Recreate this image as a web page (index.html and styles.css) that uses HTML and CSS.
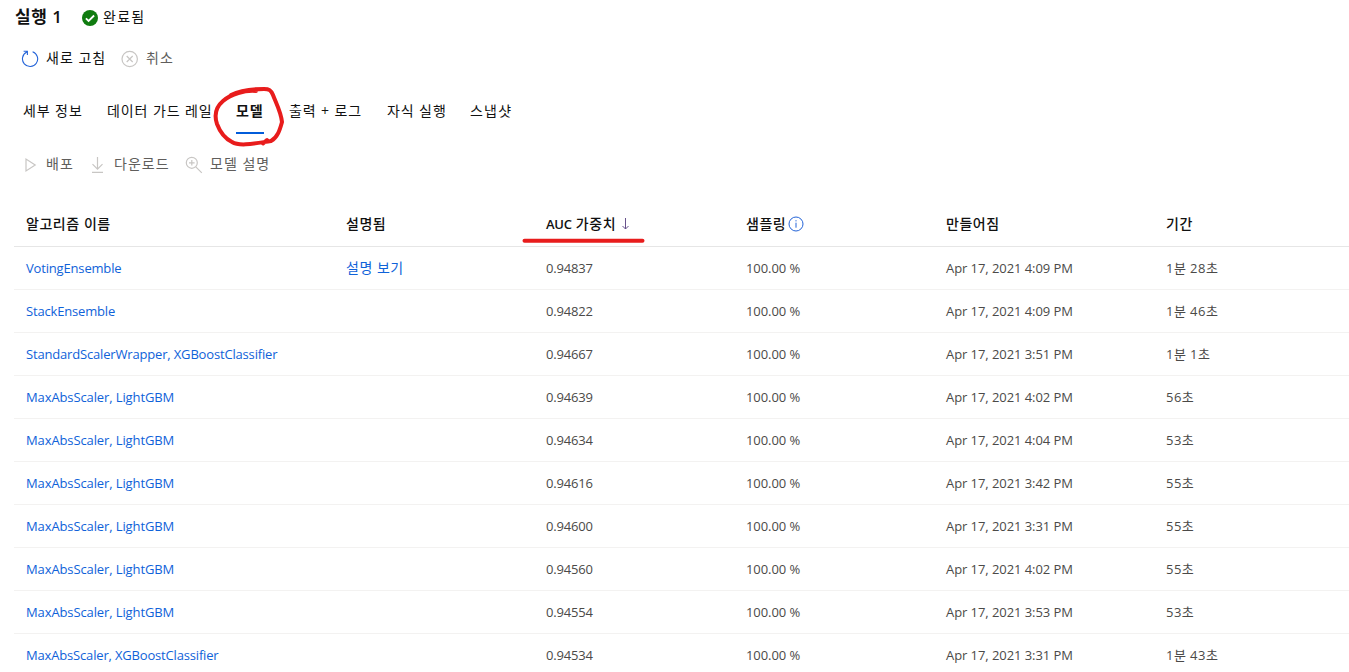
FILE: index.html
```html
<!DOCTYPE html>
<html lang="ko">
<head>
<meta charset="utf-8">
<title>실행 1</title>
<link rel="stylesheet" href="styles.css">
</head>
<body>
<main class="page">
  <header class="heading">
    <h1 class="title">실행 1</h1>
    <svg class="status-icon" width="16" height="16" viewBox="0 0 16 16"><circle cx="8" cy="8" r="8" fill="#107c10"/><path d="M3.9 8.3l2.7 2.7 5.5-5.5" fill="none" stroke="#fff" stroke-width="1.8"/></svg>
    <span class="status">완료됨</span>
  </header>

  <div class="toolbar actions">
    <button class="command refresh"><svg width="18" height="18" viewBox="0 0 18 18" fill="none" stroke="#2464d8" stroke-width="1.1"><path d="M11.6 1.8A7.6 7.6 0 1 1 5.8 2.1M2.6 1.3h3.8v3.8"/></svg><span>새로 고침</span></button>
    <button class="command cancel muted"><svg width="18" height="18" viewBox="0 0 18 18" fill="none" stroke="#c8c6c4" stroke-width="1.2"><circle cx="8.7" cy="9" r="7.7"/><path d="M5.7 6l6 6M11.7 6l-6 6"/></svg><span>취소</span></button>
  </div>

  <nav class="tabs">
    <a class="tab t1">세부 정보</a>
    <a class="tab t2">데이터 가드 레일</a>
    <a class="tab t3 active">모델</a>
    <a class="tab t4">출력 + 로그</a>
    <a class="tab t5">자식 실행</a>
    <a class="tab t6">스냅샷</a>
  </nav>

  <div class="toolbar model-actions">
    <button class="command deploy muted"><svg width="18" height="18" viewBox="0 0 18 18" fill="none" stroke="#c8c6c4" stroke-width="1.2"><path d="M5 3v12L14.2 9z"/></svg><span>배포</span></button>
    <button class="command download muted"><svg width="18" height="18" viewBox="0 0 18 18" fill="none" stroke="#c8c6c4" stroke-width="1.2"><path d="M8.5 1v12M3.5 8.2l5 5 5-5M3 16.4h11"/></svg><span>다운로드</span></button>
    <button class="command explain muted"><svg width="18" height="18" viewBox="0 0 18 18" fill="none" stroke="#c8c6c4" stroke-width="1.2"><circle cx="6.8" cy="6.8" r="5.5"/><path d="M10.8 10.8l6 6M4 6.8h5.6M6.8 4v5.6"/></svg><span>모델 설명</span></button>
  </div>

  <section class="table">
    <div class="row head">
      <span>알고리즘 이름</span><span>설명됨</span>
      <span class="metric"><span><span class="latin">AUC</span> 가중치</span><svg class="sort" width="9" height="14" viewBox="0 0 9 14" fill="none" stroke="#68528c" stroke-width="1"><path d="M4.5 1v11M1.5 9l3 3 3-3"/></svg></span>
      <span class="sampling"><span>샘플링</span><svg width="16" height="16" viewBox="0 0 16 16" fill="none" stroke="#2464d8" stroke-width="1"><circle cx="8" cy="8" r="7"/><path d="M8 6.7v5M8 4.2v1.2"/></svg></span>
      <span>만들어짐</span><span>기간</span>
    </div>
    <div class="row"><a>VotingEnsemble</a><a class="ko">설명 보기</a><span class="num">0.94837</span><span class="pct">100.00 %</span><span class="date">Apr 17, 2021 4:09 PM</span><span class="time">1분 28초</span></div>
    <div class="row"><a>StackEnsemble</a><a></a><span class="num">0.94822</span><span class="pct">100.00 %</span><span class="date">Apr 17, 2021 4:09 PM</span><span class="time">1분 46초</span></div>
    <div class="row"><a>StandardScalerWrapper, XGBoostClassifier</a><a></a><span class="num">0.94667</span><span class="pct">100.00 %</span><span class="date">Apr 17, 2021 3:51 PM</span><span class="time">1분 1초</span></div>
    <div class="row"><a class="pair">MaxAbsScaler, LightGBM</a><a></a><span class="num">0.94639</span><span class="pct">100.00 %</span><span class="date">Apr 17, 2021 4:02 PM</span><span class="time">56초</span></div>
    <div class="row"><a class="pair">MaxAbsScaler, LightGBM</a><a></a><span class="num">0.94634</span><span class="pct">100.00 %</span><span class="date">Apr 17, 2021 4:04 PM</span><span class="time">53초</span></div>
    <div class="row"><a class="pair">MaxAbsScaler, LightGBM</a><a></a><span class="num">0.94616</span><span class="pct">100.00 %</span><span class="date">Apr 17, 2021 3:42 PM</span><span class="time">55초</span></div>
    <div class="row"><a class="pair">MaxAbsScaler, LightGBM</a><a></a><span class="num">0.94600</span><span class="pct">100.00 %</span><span class="date">Apr 17, 2021 3:31 PM</span><span class="time">55초</span></div>
    <div class="row"><a class="pair">MaxAbsScaler, LightGBM</a><a></a><span class="num">0.94560</span><span class="pct">100.00 %</span><span class="date">Apr 17, 2021 4:02 PM</span><span class="time">55초</span></div>
    <div class="row"><a class="pair">MaxAbsScaler, LightGBM</a><a></a><span class="num">0.94554</span><span class="pct">100.00 %</span><span class="date">Apr 17, 2021 3:53 PM</span><span class="time">53초</span></div>
    <div class="row"><a>MaxAbsScaler, XGBoostClassifier</a><a></a><span class="num">0.94534</span><span class="pct">100.00 %</span><span class="date">Apr 17, 2021 3:31 PM</span><span class="time">1분 43초</span></div>
  </section>

  <!-- hand-drawn marks over the tab and the sorted column -->
  <svg class="ink" width="1349" height="672" viewBox="0 0 1349 672" fill="none" stroke="#e81c1c" stroke-width="4" stroke-linecap="round" stroke-linejoin="round">
    <path d="M256 91C245 90 231 94 223 101C216 107 214 115 217 124C220 132 226 139 232 142C240 147 257 143 271 141C278 137 280 129 282 122C281 112 276 103 273 95C271 90 269 89 264 89C254 89 241 90 231 95M263 143.5L267 140"/>
    <path d="M524.5 240.7H642.5"/>
  </svg>
</main>
</body>
</html>
```

FILE: styles.css
```css
* { box-sizing: border-box; }
body {
  margin: 0;
  background: #fff;
  color: #111;
  font: 13px/20px "Open Sans", "Noto Sans CJK KR", sans-serif;
}
.page {
  position: relative;
  width: 1349px;
  height: 672px;
  overflow: hidden;
  white-space: nowrap;
}
.heading { display: flex; align-items: center; height: 35px; padding-left: 15px; }
.title { width: 67px; margin: 0 0 2px; font-size: 17px; line-height: 24px; font-weight: 600; letter-spacing: 0.5px; }
.status { margin: 0 0 1px 5px; font-size: 14px; letter-spacing: 1.3px; }
.toolbar { display: flex; align-items: center; padding-left: 21px; }
.actions { height: 48px; }
.command {
  display: flex;
  align-items: center;
  gap: 7px;
  padding: 0;
  border: 0;
  background: none;
  color: inherit;
  font: inherit;
  font-size: 14px;
  letter-spacing: 1px;
}
.command svg { flex: none; }
.command span { margin-bottom: 2px; }
.muted { color: #605e5c; }
.refresh { width: 100px; }
.deploy { width: 68px; }
.download { width: 96px; }
.tabs { display: flex; height: 57px; padding: 7px 0 0 23px; font-size: 14px; letter-spacing: 0.9px; }
.tab { height: 44px; padding-top: 11px; }
.t1 { width: 84px; }
.t2 { width: 129px; }
.t3 { width: 28px; margin-right: 25px; }
.t4 { width: 98px; }
.t5 { width: 83px; }
.t6 { letter-spacing: 1.2px; }
.active { font-weight: 600; border-bottom: 2px solid #015cda; }
.model-actions { height: 50px; }
.table { margin: 13px 0 0 14px; }
.row {
  display: grid;
  grid-template-columns: 320px 200px 200px 200px 220px 1fr;
  align-items: center;
  height: 43px;
  padding-left: 12px;
  border-bottom: 1px solid #f3f2f1;
  color: #4b4a48;
}
.row a { color: #0f62d9; letter-spacing: -0.17px; }
.row .pair { letter-spacing: -0.11px; }
.row .ko { padding-bottom: 1px; font-size: 14px; letter-spacing: 0.5px; }
.num { letter-spacing: -0.2px; }
.pct, .date { letter-spacing: -0.07px; }
.time { padding-bottom: 1px; letter-spacing: 0.45px; }
.head {
  height: 44px;
  padding-bottom: 2px;
  color: #111;
  font-size: 14px;
  font-weight: 500;
  letter-spacing: 0.55px;
  border-color: #e6e6e6;
}
.latin { font-size: 13px; font-weight: 600; letter-spacing: -0.3px; }
.metric, .sampling { display: flex; align-items: center; }
.sort { margin-left: 5px; }
.sampling svg { margin-left: 2px; }
.ink { position: absolute; left: 0; top: 0; pointer-events: none; }
```
